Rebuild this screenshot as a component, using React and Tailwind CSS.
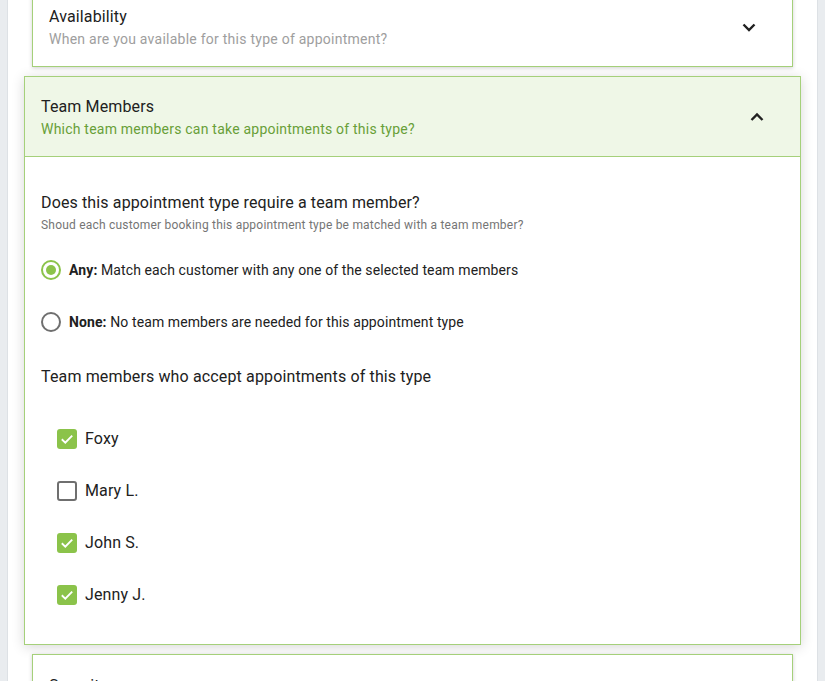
import React from 'react';

const Chevron = ({ up }) => (
  <svg width="24" height="24" viewBox="0 0 24 24" className="shrink-0">
    <polyline
      points={up ? '6.5,15 12,9.5 17.5,15' : '6.5,9.5 12,15 17.5,9.5'}
      fill="none"
      stroke="#212121"
      strokeWidth="2.4"
    />
  </svg>
);

const Radio = ({ checked }) => (
  <div
    className={`w-5 h-5 rounded-full border-2 flex items-center justify-center shrink-0 ${
      checked ? 'border-[#8bc34a]' : 'border-[#6f6f6f]'
    }`}
  >
    {checked && <div className="w-[10px] h-[10px] rounded-full bg-[#8bc34a]" />}
  </div>
);

const Checkbox = ({ checked }) =>
  checked ? (
    <div className="w-5 h-5 rounded-[3px] bg-[#8bc34a] flex items-center justify-center shrink-0">
      <svg width="16" height="16" viewBox="0 0 16 16">
        <polyline points="2.8,8.2 6.3,11.6 13.2,4.6" fill="none" stroke="#fff" strokeWidth="1.9" />
      </svg>
    </div>
  ) : (
    <div className="w-5 h-5 rounded-[3px] border-2 border-[#6f6f6f] shrink-0" />
  );

const CollapsedCard = ({ title, subtitle, className = '' }) => (
  <div className={`mx-6 bg-white border border-[#a5d07a] shadow-[0_1px_4px_rgba(0,0,0,0.18)] ${className}`}>
    <div className="flex items-center pl-4 pr-[31px] pt-[19px] pb-[17px]">
      <div className="flex-1">
        <div className="text-base leading-6 tracking-[0.13px] text-[#212121]">{title}</div>
        <div className="text-sm leading-5 tracking-[0.25px] text-[#9e9e9e]">{subtitle}</div>
      </div>
      <Chevron />
    </div>
  </div>
);

const members = [
  { name: 'Foxy', checked: true },
  { name: 'Mary L.', checked: false },
  { name: 'John S.', checked: true },
  { name: 'Jenny J.', checked: true }
];

export default function App() {
  return (
    <div className="h-[681px] overflow-hidden bg-[#e9ecef] px-[7px] font-['Roboto',sans-serif]">
      <div className="h-full bg-white border-x border-[#dde1e5] flex flex-col gap-[9px]">
        <CollapsedCard
          className="-mt-[15px]"
          title="Availability"
          subtitle="When are you available for this type of appointment?"
        />

        {/* Expanded panel */}
        <div className="mx-4 bg-white border border-[#a5d07a] shadow-[0_2px_12px_rgba(0,0,0,0.16)]">
          <div className="flex items-center bg-[#eff7e7] border-b border-[#a5d07a] pl-4 pr-[31px] pt-[18px] pb-[17px]">
            <div className="flex-1">
              <div className="text-base leading-6 tracking-[0.13px] text-[#212121]">Team Members</div>
              <div className="text-sm leading-5 tracking-[0.22px] text-[#689f38]">
                Which team members can take appointments of this type?
              </div>
            </div>
            <Chevron up />
          </div>

          <div className="px-4 pt-[34px] pb-[23px]">
            <div className="text-base leading-6 tracking-[0.13px] text-[#212121]">
              Does this appointment type require a team member?
            </div>
            <div className="mt-[2px] text-xs leading-4 tracking-[0.21px] text-[#757575]">
              Shoud each customer booking this appointment type be matched with a team member?
            </div>

            <div className="mt-[11px]">
              <div className="h-[52px] flex items-center gap-2">
                <Radio checked />
                <span className="text-sm tracking-[0.1px] text-[#212121]">
                  <b className="font-bold">Any:</b> Match each customer with any one of the selected team members
                </span>
              </div>
              <div className="h-[52px] flex items-center gap-2">
                <Radio />
                <span className="text-sm tracking-[0.1px] text-[#212121]">
                  <b className="font-bold">None:</b> No team members are needed for this appointment type
                </span>
              </div>
            </div>

            <div className="mt-[17px] text-base leading-6 tracking-[0.14px] text-[#212121]">
              Team members who accept appointments of this type
            </div>

            <div className="mt-6 pl-4">
              {members.map(m => (
                <div key={m.name} className="h-[52px] flex items-center gap-2">
                  <Checkbox checked={m.checked} />
                  <span className="text-base tracking-[0.13px] text-[#212121]">{m.name}</span>
                </div>
              ))}
            </div>
          </div>
        </div>

        <CollapsedCard title="Security" subtitle="Who can book this type of appointment?" />
      </div>
    </div>
  );
}
